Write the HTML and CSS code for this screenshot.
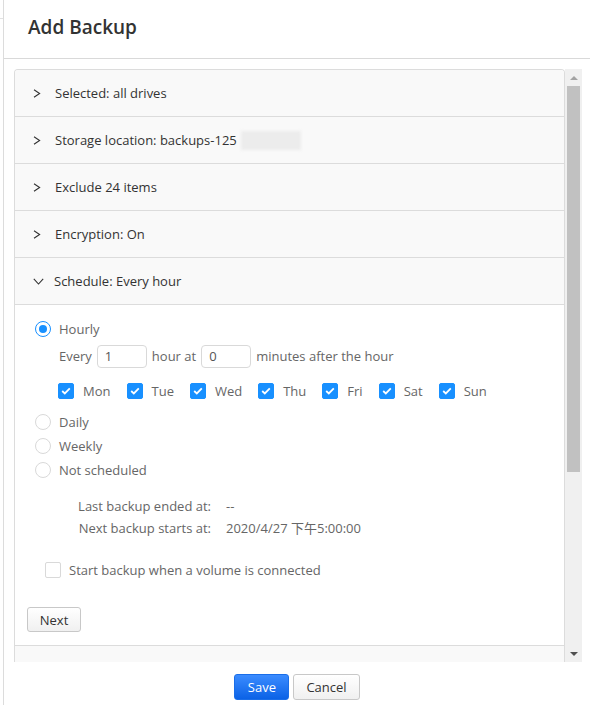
FILE: index.html
```html
<!DOCTYPE html>
<html lang="en">
<head>
    <meta charset="UTF-8">
    <meta name="viewport" content="width=device-width, initial-scale=1.0">
    <title>Add Backup</title>
    <link rel="stylesheet" href="styles.css">
</head>
<body>
    <div class="page">
        <div class="gutter"><div class="gutter-tab"></div></div>

        <div class="dialog">
            <div class="dialog-header">
                <h1 class="dialog-title">Add Backup</h1>
            </div>

            <div class="dialog-body">
                <div class="scroller">
                    <div class="panel">
                        <div class="section">
                            <div class="section-head">
                                <svg class="chevron" width="8" height="9" viewBox="0 0 8 9"><path d="M1 0.8 L6.6 4.5 L1 8.2" fill="none" stroke="#333" stroke-width="1.1"/></svg>
                                <span>Selected: all drives</span>
                            </div>
                        </div>
                        <div class="section">
                            <div class="section-head">
                                <svg class="chevron" width="8" height="9" viewBox="0 0 8 9"><path d="M1 0.8 L6.6 4.5 L1 8.2" fill="none" stroke="#333" stroke-width="1.1"/></svg>
                                <span>Storage location: backups-125</span><span class="masked"></span>
                            </div>
                        </div>
                        <div class="section">
                            <div class="section-head">
                                <svg class="chevron" width="8" height="9" viewBox="0 0 8 9"><path d="M1 0.8 L6.6 4.5 L1 8.2" fill="none" stroke="#333" stroke-width="1.1"/></svg>
                                <span>Exclude 24 items</span>
                            </div>
                        </div>
                        <div class="section">
                            <div class="section-head">
                                <svg class="chevron" width="8" height="9" viewBox="0 0 8 9"><path d="M1 0.8 L6.6 4.5 L1 8.2" fill="none" stroke="#333" stroke-width="1.1"/></svg>
                                <span>Encryption: On</span>
                            </div>
                        </div>

                        <div class="section open">
                            <div class="section-head">
                                <svg class="chevron down" width="11" height="7" viewBox="0 0 11 7"><path d="M0.8 0.8 L5.5 6 L10.2 0.8" fill="none" stroke="#333" stroke-width="1.1"/></svg>
                                <span>Schedule: Every hour</span>
                            </div>
                            <div class="section-body">
                                <label class="radio-row">
                                    <span class="radio checked"></span>
                                    <span>Hourly</span>
                                </label>
                                <div class="every-row">
                                    <span>Every</span>
                                    <span class="field">1</span>
                                    <span>hour at</span>
                                    <span class="field">0</span>
                                    <span>minutes after the hour</span>
                                </div>
                                <div class="days">
                                    <label class="day"><span class="check on"><svg width="10" height="8" viewBox="0 0 10 8"><path d="M1.2 4 L3.8 6.4 L8.8 1.4" fill="none" stroke="#fff" stroke-width="1.8"/></svg></span>Mon</label>
                                    <label class="day"><span class="check on"><svg width="10" height="8" viewBox="0 0 10 8"><path d="M1.2 4 L3.8 6.4 L8.8 1.4" fill="none" stroke="#fff" stroke-width="1.8"/></svg></span>Tue</label>
                                    <label class="day"><span class="check on"><svg width="10" height="8" viewBox="0 0 10 8"><path d="M1.2 4 L3.8 6.4 L8.8 1.4" fill="none" stroke="#fff" stroke-width="1.8"/></svg></span>Wed</label>
                                    <label class="day"><span class="check on"><svg width="10" height="8" viewBox="0 0 10 8"><path d="M1.2 4 L3.8 6.4 L8.8 1.4" fill="none" stroke="#fff" stroke-width="1.8"/></svg></span>Thu</label>
                                    <label class="day"><span class="check on"><svg width="10" height="8" viewBox="0 0 10 8"><path d="M1.2 4 L3.8 6.4 L8.8 1.4" fill="none" stroke="#fff" stroke-width="1.8"/></svg></span>Fri</label>
                                    <label class="day"><span class="check on"><svg width="10" height="8" viewBox="0 0 10 8"><path d="M1.2 4 L3.8 6.4 L8.8 1.4" fill="none" stroke="#fff" stroke-width="1.8"/></svg></span>Sat</label>
                                    <label class="day"><span class="check on"><svg width="10" height="8" viewBox="0 0 10 8"><path d="M1.2 4 L3.8 6.4 L8.8 1.4" fill="none" stroke="#fff" stroke-width="1.8"/></svg></span>Sun</label>
                                </div>
                                <label class="radio-row first-off">
                                    <span class="radio"></span>
                                    <span>Daily</span>
                                </label>
                                <label class="radio-row">
                                    <span class="radio"></span>
                                    <span>Weekly</span>
                                </label>
                                <label class="radio-row">
                                    <span class="radio"></span>
                                    <span>Not scheduled</span>
                                </label>

                                <div class="info">
                                    <span class="info-label">Last backup ended at:</span>
                                    <span>--</span>
                                    <span class="info-label">Next backup starts at:</span>
                                    <span>2020/4/27 下午5:00:00</span>
                                </div>

                                <label class="option-row">
                                    <span class="check"></span>
                                    <span>Start backup when a volume is connected</span>
                                </label>

                                <button class="btn next-btn">Next</button>
                            </div>
                        </div>

                        <div class="section">
                            <div class="section-head"></div>
                        </div>
                    </div>

                    <div class="scrollbar">
                        <div class="scroll-btn"><span class="arrow-up"></span></div>
                        <div class="scroll-track"><div class="scroll-thumb"></div></div>
                        <div class="scroll-btn"><span class="arrow-down"></span></div>
                    </div>
                </div>
            </div>

            <div class="dialog-footer">
                <button class="btn btn-primary">Save</button>
                <button class="btn">Cancel</button>
            </div>
        </div>
    </div>
</body>
</html>
```

FILE: styles.css
```css
*{
    box-sizing: border-box;
}
body{
    margin: 0;
    background-color: #fff;
    font-family: "Open Sans", "Noto Sans CJK SC", sans-serif;
    font-size: 13px;
    color: #333;
}
.page{
    display: flex;
    height: 705px;
}

/* left edge of the window behind the dialog */
.gutter{
    width: 4px;
    border-right: 1px solid #dcdcdc;
}
.gutter-tab{
    height: 19px;
    border-bottom: 1px solid #e2e2e2;
}

.dialog{
    flex: 1;
    display: flex;
    flex-direction: column;
}
.dialog-header{
    height: 59px;
    border-bottom: 1px solid #d9d9d9;
    padding-left: 24px;
    display: flex;
    align-items: center;
}
.dialog-title{
    margin: 0 0 4px 0;
    font-size: 19px;
    font-weight: 600;
    color: #333;
}
.dialog-body{
    padding: 10px 8px 0 10px;
}
.scroller{
    display: flex;
    height: 593px;
}

/* accordion */
.panel{
    flex: 1;
    overflow: hidden;
    border: 1px solid #dcdcdc;
    border-bottom: none;
    border-radius: 4px 4px 0 0;
}
.section{
    border-bottom: 1px solid #dcdcdc;
}
.section-head{
    height: 46px;
    background-color: #f9f9f9;
    display: flex;
    align-items: center;
    padding-left: 18px;
    color: #333;
}
.open .section-head{
    height: 47px;
    border-bottom: 1px solid #dcdcdc;
}
.chevron{
    margin-right: 14px;
}
.chevron.down{
    margin-right: 10px;
    margin-top: 1px;
}
.masked{
    display: inline-block;
    width: 60px;
    height: 19px;
    margin-left: 4px;
    background-color: #ececec;
    filter: blur(1.5px);
}
.section-body{
    background-color: #fff;
    padding: 12px 12px 13px 12px;
    color: #666;
}

/* radios and checkboxes */
.radio-row{
    display: flex;
    align-items: center;
    height: 24px;
    margin-left: 8px;
}
.radio{
    width: 16px;
    height: 16px;
    border: 1px solid #d9d9d9;
    border-radius: 50%;
    margin-right: 8px;
    display: flex;
    align-items: center;
    justify-content: center;
}
.radio.checked{
    border-color: #1890ff;
}
.radio.checked::after{
    content: "";
    width: 8px;
    height: 8px;
    border-radius: 50%;
    background-color: #1890ff;
}
.first-off{
    margin-top: 6px;
}
.every-row{
    display: flex;
    align-items: center;
    gap: 5px;
    height: 30px;
    padding-left: 32px;
}
.field{
    width: 50px;
    height: 23px;
    border: 1px solid #d9d9d9;
    border-radius: 4px;
    padding-left: 7px;
    line-height: 21px;
    color: #555;
}
.days{
    display: flex;
    gap: 16px;
    height: 26px;
    margin-top: 7px;
    padding-left: 31px;
    align-items: center;
}
.day{
    display: flex;
    align-items: center;
}
.check{
    width: 16px;
    height: 16px;
    border: 1px solid #d9d9d9;
    border-radius: 2px;
    margin-right: 9px;
    display: flex;
    align-items: center;
    justify-content: center;
}
.check.on{
    background-color: #1890ff;
    border-color: #1890ff;
}

.info{
    display: grid;
    grid-template-columns: 135px auto;
    column-gap: 15px;
    margin: 13px 0 0 49px;
    line-height: 22px;
}
.info-label{
    text-align: right;
}
.option-row{
    display: flex;
    align-items: center;
    height: 24px;
    margin: 19px 0 0 18px;
}
.option-row .check{
    margin-right: 8px;
}

/* buttons */
.btn{
    font-family: inherit;
    font-size: 13px;
    color: #333;
    height: 25px;
    padding: 0 12px;
    border: 1px solid #c8c8c8;
    border-radius: 3px;
    background: linear-gradient(#ffffff, #f0f0f0);
    cursor: pointer;
}
.next-btn{
    display: block;
    width: 54px;
    margin-top: 25px;
    padding: 0;
}
.dialog-footer{
    display: flex;
    justify-content: center;
    gap: 4px;
    padding-top: 12px;
}
.dialog-footer .btn{
    height: 26px;
    min-width: 55px;
}
.btn-primary{
    color: #fff;
    border-color: #1a6ee8;
    background: linear-gradient(#3b8cff, #0b62e6);
}

/* scrollbar */
.scrollbar{
    width: 17px;
    background-color: #f0f0f0;
    display: flex;
    flex-direction: column;
}
.scroll-btn{
    height: 17px;
    display: flex;
    align-items: center;
    justify-content: center;
}
.scroll-track{
    flex: 1;
}
.scroll-thumb{
    height: 386px;
    margin: 0 2px;
    background-color: #c1c1c1;
}
.arrow-up{
    border-left: 4px solid transparent;
    border-right: 4px solid transparent;
    border-bottom: 4px solid #a3a3a3;
}
.arrow-down{
    border-left: 4px solid transparent;
    border-right: 4px solid transparent;
    border-top: 4px solid #505050;
}
```
